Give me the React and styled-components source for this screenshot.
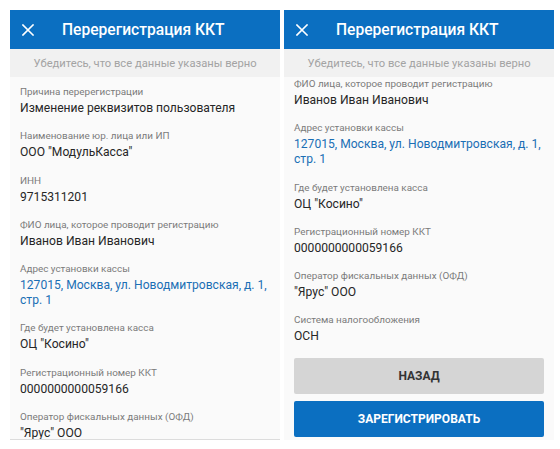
import React from "react";
import styled, { createGlobalStyle } from "styled-components";

const GlobalStyle = createGlobalStyle`
  html, body {
    margin: 0;
    padding: 0;
    background: #ffffff;
  }
  body {
    font-family: Roboto, "Noto Sans", "Liberation Sans", sans-serif;
  }
`;

const fields = [
  { label: "Причина перерегистрации", value: "Изменение реквизитов пользователя" },
  { label: "Наименование юр. лица или ИП", value: 'ООО "МодульКасса"' },
  { label: "ИНН", value: "9715311201" },
  { label: "ФИО лица, которое проводит регистрацию", value: "Иванов Иван Иванович" },
  {
    label: "Адрес установки кассы",
    value: ["127015, Москва, ул. Новодмитровская, д. 1,", "стр. 1"],
    link: true,
  },
  { label: "Где будет установлена касса", value: 'ОЦ "Косино"' },
  { label: "Регистрационный номер ККТ", value: "0000000000059166" },
  { label: "Оператор фискальных данных (ОФД)", value: '"Ярус" ООО' },
  { label: "Система налогообложения", value: "ОСН" },
];

function CloseIcon() {
  return (
    <svg width="12" height="12" viewBox="0 0 12 12">
      <path d="M1 1 L11 11 M11 1 L1 11" stroke="#fff" strokeWidth="1.6" strokeLinecap="square" />
    </svg>
  );
}

function Field({ label, value, link }) {
  const lines = Array.isArray(value) ? value : [value];
  return (
    <Item>
      <Label>{label}</Label>
      {lines.map((line) => (
        <Value key={line} $link={link}>
          {line}
        </Value>
      ))}
    </Item>
  );
}

function Screen({ items, buttons, top, bordered }) {
  return (
    <Phone $bordered={bordered}>
      <Header>
        <CloseBtn>
          <CloseIcon />
        </CloseBtn>
        <Title>Перерегистрация ККТ</Title>
      </Header>
      <Notice>Убедитесь, что все данные указаны верно</Notice>
      <Content $top={top}>
        {items.map((f) => (
          <Field key={f.label} {...f} />
        ))}
        {buttons && (
          <Buttons>
            <Button>НАЗАД</Button>
            <Button $primary>ЗАРЕГИСТРИРОВАТЬ</Button>
          </Buttons>
        )}
      </Content>
    </Phone>
  );
}

export default function App() {
  return (
    <>
      <GlobalStyle />
      <Page>
        <Screen items={fields.slice(0, 8)} top={8} bordered />
        <Screen items={fields.slice(3)} top={0} buttons />
      </Page>
    </>
  );
}

const Page = styled.div`
  display: flex;
  gap: 4px;
  padding: 10px 0 0 10px;
`;

const Phone = styled.div`
  width: 270px;
  height: 430px;
  background: #fafafa;
  display: flex;
  flex-direction: column;
  overflow: hidden;
  box-sizing: border-box;
  border-bottom: 1px solid ${(p) => (p.$bordered ? "#dcdcdc" : "transparent")};
`;

const Header = styled.div`
  height: 39px;
  flex-shrink: 0;
  background: #0b6fc1;
  display: flex;
  align-items: center;
  color: #fff;
`;

const CloseBtn = styled.div`
  width: 40px;
  padding-left: 12px;
  display: flex;
  align-items: center;
`;

const Title = styled.div`
  font-size: 15.6px;
  font-weight: 500;
`;

const Notice = styled.div`
  height: 28px;
  flex-shrink: 0;
  background: #f1f1f1;
  color: #a3a3a3;
  font-size: 11.2px;
  display: flex;
  align-items: center;
  justify-content: center;
`;

const Content = styled.div`
  padding: ${(p) => p.$top}px 10px 0 10px;
`;

const Item = styled.div`
  padding-bottom: 13.3px;
`;

const Label = styled.div`
  font-size: 9.9px;
  line-height: 14px;
  margin-bottom: 2px;
  color: #7a7a7a;
`;

const Value = styled.div`
  font-size: 12.1px;
  line-height: 15px;
  white-space: nowrap;
  color: ${(p) => (p.$link ? "#1b6fb5" : "#262626")};
`;

const Buttons = styled.div`
  display: flex;
  flex-direction: column;
  gap: 7px;
  margin-top: 0;
`;

const Button = styled.div`
  height: 36px;
  display: flex;
  align-items: center;
  justify-content: center;
  font-size: 12px;
  font-weight: 700;
  background: ${(p) => (p.$primary ? "#0b6fc1" : "#d5d5d5")};
  color: ${(p) => (p.$primary ? "#ffffff" : "#333333")};
  border-radius: 2px;
`;
